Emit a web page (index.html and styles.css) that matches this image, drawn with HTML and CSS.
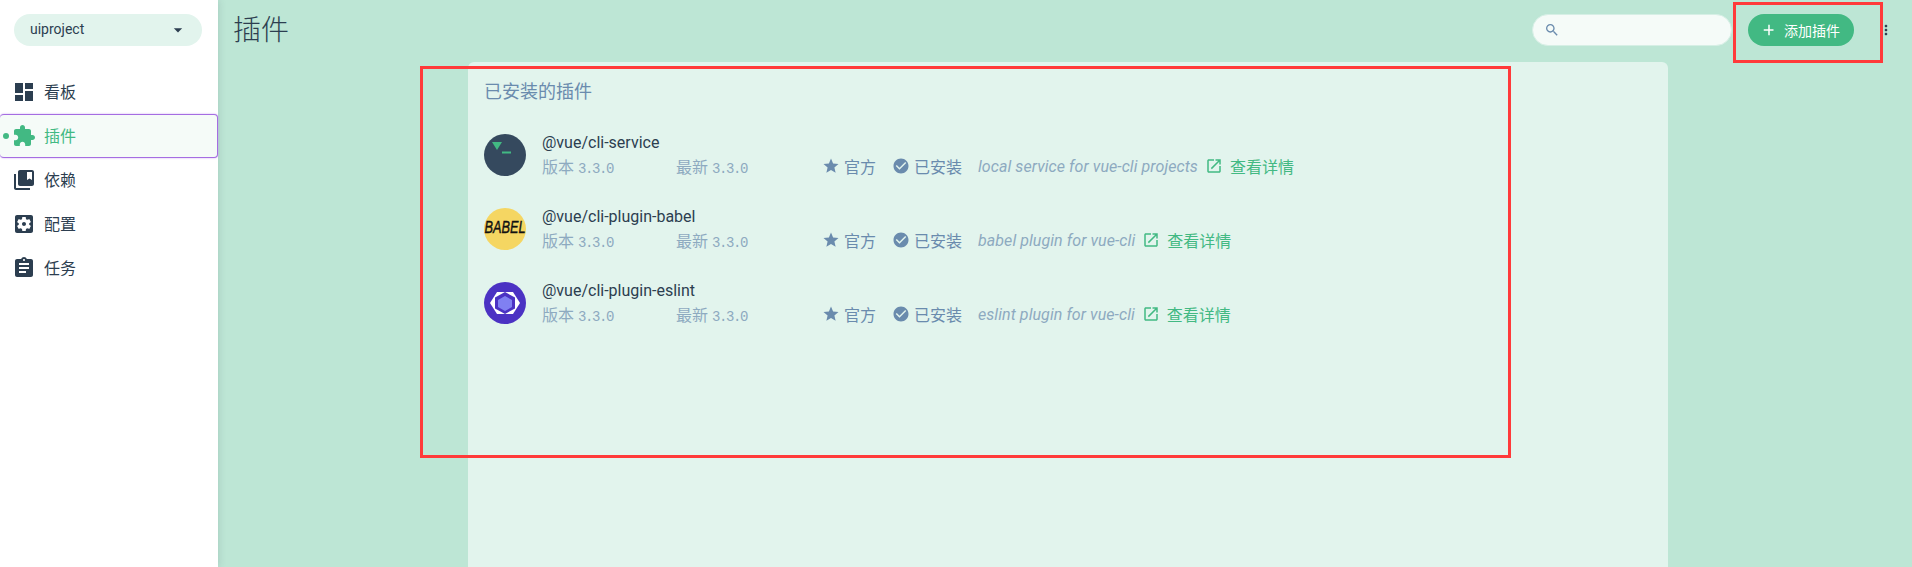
FILE: index.html

```html
<!DOCTYPE html>
<html lang="zh-CN">
<head>
<meta charset="UTF-8">
<title>插件</title>
<link rel="stylesheet" href="styles.css">
</head>
<body>
<svg class="sprite" xmlns="http://www.w3.org/2000/svg">
  <symbol id="i-dashboard" viewBox="0 0 24 24"><path d="M3 13h8V3H3v10zm0 8h8v-6H3v6zm10 0h8V11h-8v10zm0-18v6h8V3h-8z"/></symbol>
  <symbol id="i-extension" viewBox="0 0 24 24"><path d="M20.5 11H19V7c0-1.1-.9-2-2-2h-4V3.5C13 2.12 11.88 1 10.5 1S8 2.12 8 3.5V5H4c-1.1 0-1.99.9-1.99 2v3.8H3.5c1.49 0 2.7 1.21 2.7 2.7s-1.21 2.7-2.7 2.7H2V20c0 1.1.9 2 2 2h3.8v-1.5c0-1.49 1.21-2.7 2.7-2.7 1.49 0 2.7 1.21 2.7 2.7V22H17c1.1 0 2-.9 2-2v-4h1.5c1.38 0 2.5-1.12 2.5-2.5S21.88 11 20.5 11z"/></symbol>
  <symbol id="i-collections" viewBox="0 0 24 24"><path d="M4 6H2v14c0 1.1.9 2 2 2h14v-2H4V6zm16-4H8c-1.1 0-2 .9-2 2v12c0 1.1.9 2 2 2h12c1.1 0 2-.9 2-2V4c0-1.1-.9-2-2-2zm0 10l-2.5-1.5L15 12V4h5v8z"/></symbol>
  <symbol id="i-settings" viewBox="0 0 24 24"><path d="M12 10c-1.1 0-2 .9-2 2s.9 2 2 2 2-.9 2-2-.9-2-2-2zm7-7H5c-1.1 0-2 .9-2 2v14c0 1.1.9 2 2 2h14c1.1 0 2-.9 2-2V5c0-1.1-.9-2-2-2zm-1.75 9c0 .23-.02.46-.05.68l1.48 1.16c.13.11.17.3.08.45l-1.4 2.42c-.09.15-.27.21-.43.15l-1.74-.7c-.36.28-.76.51-1.18.69l-.26 1.85c-.03.17-.18.3-.35.3h-2.8c-.17 0-.32-.13-.35-.29l-.26-1.85c-.43-.18-.82-.41-1.18-.69l-1.74.7c-.16.06-.34 0-.43-.15l-1.4-2.42c-.09-.15-.05-.34.08-.45l1.48-1.16c-.03-.23-.05-.46-.05-.69 0-.23.02-.46.05-.68l-1.48-1.16c-.13-.11-.17-.3-.08-.45l1.4-2.42c.09-.15.27-.21.43-.15l1.74.7c.36-.28.76-.51 1.18-.69l.26-1.85c.03-.17.18-.3.35-.3h2.8c.17 0 .32.13.35.29l.26 1.85c.43.18.82.41 1.18.69l1.74-.7c.16-.06.34 0 .43.15l1.4 2.42c.09.15.05.34-.08.45l-1.48 1.16c.03.23.05.46.05.69z"/></symbol>
  <symbol id="i-assignment" viewBox="0 0 24 24"><path d="M19 3h-4.18C14.4 1.84 13.3 1 12 1c-1.3 0-2.4.84-2.82 2H5c-1.1 0-2 .9-2 2v14c0 1.1.9 2 2 2h14c1.1 0 2-.9 2-2V5c0-1.1-.9-2-2-2zm-7 0c.55 0 1 .45 1 1s-.45 1-1 1-1-.45-1-1 .45-1 1-1zm2 14H7v-2h7v2zm3-4H7v-2h10v2zm0-4H7V7h10v2z"/></symbol>
  <symbol id="i-star" viewBox="0 0 24 24"><path d="M12 17.27L18.18 21l-1.64-7.03L22 9.24l-7.19-.61L12 2 9.19 8.63 2 9.24l5.46 4.73L5.82 21z"/></symbol>
  <symbol id="i-check" viewBox="0 0 24 24"><path d="M12 2C6.48 2 2 6.48 2 12s4.48 10 10 10 10-4.48 10-10S17.52 2 12 2zm-2 15l-5-5 1.41-1.41L10 14.17l7.59-7.59L19 8l-9 9z"/></symbol>
  <symbol id="i-open" viewBox="0 0 24 24"><path d="M19 19H5V5h7V3H5c-1.11 0-2 .9-2 2v14c0 1.1.89 2 2 2h14c1.1 0 2-.9 2-2v-7h-2v7zM14 3v2h3.59l-9.83 9.83 1.41 1.41L19 6.41V10h2V3h-7z"/></symbol>
</svg>

<aside class="sidebar">
  <div class="project-select">
    <span>uiproject</span>
    <svg class="caret" viewBox="0 0 24 24"><path d="M7 10l5 5 5-5z"/></svg>
  </div>
  <nav class="nav">
    <a class="nav-item"><svg class="nav-icon"><use href="#i-dashboard"/></svg><span>看板</span></a>
    <a class="nav-item active"><i class="dot"></i><svg class="nav-icon"><use href="#i-extension"/></svg><span>插件</span></a>
    <a class="nav-item"><svg class="nav-icon"><use href="#i-collections"/></svg><span>依赖</span></a>
    <a class="nav-item"><svg class="nav-icon"><use href="#i-settings"/></svg><span>配置</span></a>
    <a class="nav-item"><svg class="nav-icon"><use href="#i-assignment"/></svg><span>任务</span></a>
  </nav>
</aside>

<main class="main">
  <header class="topbar">
    <h1>插件</h1>
    <div class="search">
      <svg viewBox="0 0 24 24"><path d="M15.5 14h-.79l-.28-.27C15.41 12.59 16 11.11 16 9.5 16 5.91 13.09 3 9.5 3S3 5.91 3 9.5 5.91 16 9.5 16c1.61 0 3.09-.59 4.23-1.57l.27.28v.79l5 4.99L20.49 19l-4.99-5zm-6 0C7.01 14 5 11.99 5 9.5S7.01 5 9.5 5 14 7.01 14 9.5 11.99 14 9.5 14z"/></svg>
    </div>
    <button class="add-btn">
      <svg viewBox="0 0 24 24"><path d="M19 13h-6v6h-2v-6H5v-2h6V5h2v6h5v2z"/></svg>
      <span>添加插件</span>
    </button>
    <svg class="more" viewBox="0 0 24 24"><path d="M12 8c1.1 0 2-.9 2-2s-.9-2-2-2-2 .9-2 2 .9 2 2 2zm0 2c-1.1 0-2 .9-2 2s.9 2 2 2 2-.9 2-2-.9-2-2-2zm0 6c-1.1 0-2 .9-2 2s.9 2 2 2 2-.9 2-2-.9-2-2-2z"/></svg>
  </header>

  <section class="card">
    <h2>已安装的插件</h2>

    <div class="plugin">
      <svg class="logo" viewBox="0 0 42 42">
        <circle cx="21" cy="21" r="21" fill="#35495e"/>
        <path d="M8 8h10l-5 8z" fill="#42b983"/>
        <rect x="18" y="17.500" width="9" height="2" fill="#42b983"/>
      </svg>
      <div class="plugin-info">
        <div class="plugin-name">@vue/cli-service</div>
        <div class="plugin-meta">
          <span class="version">版本 <b>3.3.0</b></span>
          <span class="latest">最新 <b>3.3.0</b></span>
          <span class="tag official"><svg><use href="#i-star"/></svg>官方</span>
          <span class="tag installed"><svg><use href="#i-check"/></svg>已安装</span>
          <span class="desc">local service for vue-cli projects</span>
          <a class="more-link"><svg><use href="#i-open"/></svg>查看详情</a>
        </div>
      </div>
    </div>

    <div class="plugin">
      <svg class="logo" viewBox="0 0 42 42">
        <circle cx="21" cy="21" r="21" fill="#f5d662"/>
        <text class="babel" x="0.500" y="25" textLength="41" lengthAdjust="spacingAndGlyphs">BABEL</text>
      </svg>
      <div class="plugin-info">
        <div class="plugin-name">@vue/cli-plugin-babel</div>
        <div class="plugin-meta">
          <span class="version">版本 <b>3.3.0</b></span>
          <span class="latest">最新 <b>3.3.0</b></span>
          <span class="tag official"><svg><use href="#i-star"/></svg>官方</span>
          <span class="tag installed"><svg><use href="#i-check"/></svg>已安装</span>
          <span class="desc">babel plugin for vue-cli</span>
          <a class="more-link"><svg><use href="#i-open"/></svg>查看详情</a>
        </div>
      </div>
    </div>

    <div class="plugin">
      <svg class="logo" viewBox="0 0 42 42">
        <circle cx="21" cy="21" r="21" fill="#4b32c3"/>
        <path d="M6 21l7-11h16l7 11-7 11H13z" fill="#fff"/>
        <path d="M21 10l10 5.500v11L21 32l-10-5.500v-11z" fill="#4b32c3"/>
        <path d="M21 14l7 4v7l-7 4-7-4v-7z" fill="#8080f2"/>
      </svg>
      <div class="plugin-info">
        <div class="plugin-name">@vue/cli-plugin-eslint</div>
        <div class="plugin-meta">
          <span class="version">版本 <b>3.3.0</b></span>
          <span class="latest">最新 <b>3.3.0</b></span>
          <span class="tag official"><svg><use href="#i-star"/></svg>官方</span>
          <span class="tag installed"><svg><use href="#i-check"/></svg>已安装</span>
          <span class="desc">eslint plugin for vue-cli</span>
          <a class="more-link"><svg><use href="#i-open"/></svg>查看详情</a>
        </div>
      </div>
    </div>
  </section>
</main>

<!-- red annotation boxes drawn over the screenshot -->
<div class="mark mark-list"></div>
<div class="mark mark-add"></div>
</body>
</html>
```

FILE: styles.css

```css
html,body{margin:0;height:100%;overflow:hidden;}
body{display:flex;font-family:Roboto,"Noto Sans CJK SC",sans-serif;font-size:16px;color:#2c3e50;background:#bde6d5;}
.sprite{display:none;}
svg{fill:currentColor;flex:none;}

.sidebar{width:218px;flex:none;background:#fff;box-shadow:0 0 8px rgba(44,62,80,.18);position:relative;z-index:1;}
.project-select{display:flex;align-items:center;justify-content:space-between;height:32px;margin:14px 16px 0 14px;padding:0 14px 0 16px;border-radius:16px;background:#e2f4ed;font-size:14px;}
.project-select span{margin-bottom:2px;}
.caret{width:20px;height:20px;}
.nav{margin-top:24px;}
.nav-item{display:flex;align-items:center;gap:8px;height:44px;padding-left:12px;box-sizing:border-box;position:relative;}
.nav-item span{margin-bottom:2px;}
.nav-icon{width:24px;height:24px;}
.nav-item.active{color:#42b983;background:#f5fbf8;border:1px solid #a56de2;border-left:none;border-radius:4px;padding-left:12px;box-shadow:0 0 2px #c9a4f0;}
.dot{position:absolute;left:3px;top:18px;width:6px;height:6px;border-radius:50%;background:#42b983;}

.main{flex:1;min-width:0;}
.topbar{display:flex;align-items:center;height:62px;padding:0 18px 2px 15px;box-sizing:border-box;}
.topbar h1{margin:2px auto 0 0;font-size:28px;font-weight:300;line-height:60px;}
.search{display:flex;align-items:center;width:200px;height:32px;box-sizing:border-box;padding-left:11px;border-radius:16px;background:#f5fbf8;border:1px solid #d6efe5;color:#6a8bad;}
.search svg{width:16px;height:16px;}
.add-btn{display:flex;align-items:center;gap:6px;width:106px;height:32px;margin-left:16px;padding:0 0 0 12px;border:none;border-radius:16px;background:#42b983;color:#fff;font:14px Roboto,"Noto Sans CJK SC",sans-serif;}
.add-btn svg{width:18px;height:18px;}
.more{width:16px;height:16px;margin-left:24px;}

.card{width:1200px;height:505px;margin-left:250px;box-sizing:border-box;padding:18px 16px 0;background:#e2f4ed;border-radius:6px 6px 0 0;}
.card h2{margin:0 0 14px;font-size:18px;font-weight:400;line-height:24px;color:#6a8bad;}
.plugin{display:flex;align-items:center;gap:16px;height:74px;}
.logo{width:42px;height:42px;overflow:visible;}
.babel{font:italic 400 17px "Liberation Sans",sans-serif;fill:#111;stroke:#111;stroke-width:.4;}
.plugin-info{padding-bottom:1px;}
.plugin-name{font-size:16px;line-height:24px;}
.plugin-meta{display:flex;align-items:center;height:24px;margin-top:-1px;color:#6a8bad;white-space:nowrap;}
.plugin-meta svg{width:18px;height:18px;}
.version,.latest{opacity:.7;}
.version{width:134px;}
.latest{width:146px;}
.version b,.latest b{font:14px "Liberation Mono",monospace;letter-spacing:-1.4px;}
.tag{display:flex;align-items:center;gap:4px;}
.official{width:70px;}
.installed{width:86px;}
.desc{font-size:16px;font-style:italic;letter-spacing:.07px;opacity:.7;margin-right:7px;}
.more-link{display:flex;align-items:center;gap:7px;color:#42b983;}

.mark{position:absolute;box-sizing:border-box;border:3px solid #ff3a3a;}
.mark-list{left:420px;top:66px;width:1091px;height:392px;}
.mark-add{left:1733px;top:2px;width:150px;height:61px;}
```
